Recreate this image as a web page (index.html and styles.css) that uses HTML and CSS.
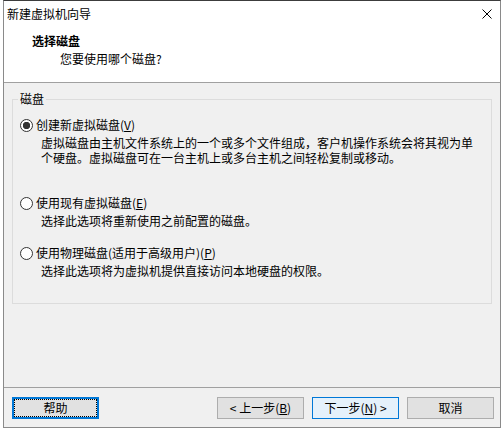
FILE: index.html
```html
<!DOCTYPE html>
<html lang="zh-CN">
<head>
<meta charset="utf-8">
<title>新建虚拟机向导</title>
<link rel="stylesheet" href="styles.css">
</head>
<body>
<div class="window">
  <div class="head">
    <div class="titlebar">
      <span class="app-title">新建虚拟机向导</span>
      <svg class="close" viewBox="0 0 10 10" width="10" height="10" aria-label="关闭">
        <path d="M0.5 0.5 L9.5 9.5 M9.5 0.5 L0.5 9.5" stroke="#000" stroke-width="1" fill="none"/>
      </svg>
    </div>
    <div class="h-title">选择磁盘</div>
    <div class="h-sub">您要使用哪个磁盘?</div>
  </div>
  <div class="content">
    <fieldset class="group">
      <legend class="group-label">磁盘</legend>
      <div class="opt">
        <div class="radio-row"><span class="radio checked"></span><span>创建新虚拟磁盘(<u>V</u>)</span></div>
        <div class="desc">虚拟磁盘由主机文件系统上的一个或多个文件组成，客户机操作系统会将其视为单个硬盘。虚拟磁盘可在一台主机上或多台主机之间轻松复制或移动。</div>
      </div>
      <div class="opt opt-2">
        <div class="radio-row"><span class="radio"></span><span>使用现有虚拟磁盘(<u>E</u>)</span></div>
        <div class="desc">选择此选项将重新使用之前配置的磁盘。</div>
      </div>
      <div class="opt opt-3">
        <div class="radio-row"><span class="radio"></span><span>使用物理磁盘(适用于高级用户)(<u>P</u>)</span></div>
        <div class="desc">选择此选项将为虚拟机提供直接访问本地硬盘的权限。</div>
      </div>
    </fieldset>
  </div>
  <div class="footer">
    <button class="btn btn-help"><span class="focus">帮助</span></button>
    <div class="nav">
      <button class="btn">&lt; 上一步(<u>B</u>)</button>
      <button class="btn btn-default">下一步(<u>N</u>) &gt;</button>
      <button class="btn">取消</button>
    </div>
  </div>
</div>
</body>
</html>
```
FILE: styles.css
```css
html, body {
  margin: 0;
  padding: 0;
}
body {
  background: #ffffff;
  font-family: "Noto Sans CJK SC", "Microsoft YaHei", sans-serif;
  font-size: 12px;
  color: #000;
}
.window {
  box-sizing: border-box;
  width: 498px;
  height: 428px;
  margin-left: 3px;
  border: 1px solid #8a8a8a;
  border-top-color: #3c3c3c;
  background: #f0f0f0;
  display: flex;
  flex-direction: column;
}
.head {
  flex: none;
  height: 81px;
  background: #ffffff;
  border-bottom: 1px solid #a0a0a0;
}
.titlebar {
  height: 25px;
  line-height: 25px;
  display: flex;
  align-items: center;
  justify-content: space-between;
  padding: 0 8px 0 3px;
}
.close {
  display: block;
  width: 10px;
  height: 10px;
}
.h-title {
  margin-top: 7px;
  padding-left: 28px;
  font-weight: bold;
  line-height: 16px;
}
.h-sub {
  margin-top: 2px;
  padding-left: 56px;
  line-height: 16px;
}
.content {
  flex: none;
  box-sizing: border-box;
  height: 304px;
  padding: 8px 8px 0 8px;
}
.group {
  box-sizing: border-box;
  height: 213px;
  margin: 0;
  min-width: 0;
  border: 1px solid #dcdcdc;
  padding: 10px 7px 0 7px;
}
.group-label {
  padding: 0 2px;
  margin-left: -2px;
  line-height: 16px;
}
.radio-row {
  display: flex;
  align-items: center;
  height: 16px;
  line-height: 16px;
  white-space: nowrap;
}
.radio {
  flex: none;
  box-sizing: border-box;
  width: 13px;
  height: 13px;
  margin-right: 3px;
  border: 1px solid #333;
  border-radius: 50%;
  background: #fff;
}
.radio.checked {
  background: radial-gradient(circle, #333 0 3.4px, #fff 4px);
}
.desc {
  margin: 2px 0 0 21px;
  width: 440px;
  line-height: 15px;
}
.opt-2 {
  margin-top: 30px;
}
.opt-3 {
  margin-top: 17px;
}
.footer {
  flex: none;
  box-sizing: border-box;
  height: 40px;
  border-top: 1px solid #a0a0a0;
  padding: 9px 6px 0 8px;
  display: flex;
  align-items: flex-start;
  justify-content: space-between;
}
.nav {
  display: flex;
  gap: 8px;
}
.btn {
  box-sizing: border-box;
  width: 87px;
  height: 22px;
  padding: 0;
  margin: 0;
  border: 1px solid #adadad;
  background: #e1e1e1;
  font: inherit;
  line-height: 18px;
  color: #000;
  display: flex;
  align-items: center;
  justify-content: center;
}
.btn-default {
  border-color: #0078d7;
  background: #e5f1fb;
}
.btn-help {
  border: 2px solid #0078d7;
}
.focus {
  box-sizing: border-box;
  width: 100%;
  height: 100%;
  border: 1px dotted #000;
  display: flex;
  align-items: center;
  justify-content: center;
}
```
